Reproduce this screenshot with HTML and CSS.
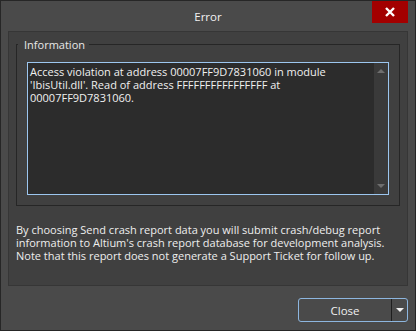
FILE: index.html
```html
<!DOCTYPE html>
<html lang="en">
  <head>
    <meta charset="UTF-8" />
    <title>Error</title>
    <link rel="stylesheet" href="styles.css">
  </head>
  <body>
    <div class="window">
      <div class="titlebar">
        <span class="title">Error</span>
        <button class="close-x" title="Close">
          <svg width="10" height="10" viewBox="0 0 10 10">
            <path d="M1 1 L9 9 M9 1 L1 9" stroke="#fff" stroke-width="2.4" />
          </svg>
        </button>
      </div>

      <div class="panel">
        <fieldset class="group">
          <legend>Information</legend>
          <div class="memo">
            <div class="memo-text">
              Access violation at address 00007FF9D7831060 in module
              'IbisUtil.dll'. Read of address FFFFFFFFFFFFFFFF at
              00007FF9D7831060.
            </div>
            <div class="scrollbar">
              <span class="arrow up"></span>
              <span class="arrow down"></span>
            </div>
          </div>
        </fieldset>

        <p class="note">
          By choosing Send crash report data you will submit crash/debug report
          information to Altium's crash report database for development analysis.
          Note that this report does not generate a Support Ticket for follow up.
        </p>
      </div>

      <div class="footer">
        <div class="split-button">
          <button class="main">Close</button>
          <button class="drop"><span class="caret"></span></button>
        </div>
      </div>
    </div>
  </body>
</html>
```

FILE: styles.css
```css
body {
  margin: 0;
  background: #1e1e1e;
  font-family: "Open Sans", "Noto Sans", sans-serif;
  font-size: 11px;
  color: #f0f0f0;
}
.window {
  box-sizing: border-box;
  width: 416px;
  height: 331px;
  border: 1px solid #262626;
  background: #4a4a4a;
  display: flex;
  flex-direction: column;
}
.titlebar {
  display: flex;
  align-items: flex-start;
  height: 30px;
}
.title {
  flex: 1;
  text-align: center;
  padding-left: 43px;
  line-height: 31px;
  font-size: 11.5px;
  color: #f2f2f2;
}
.close-x {
  width: 36px;
  height: 22px;
  margin-right: 7px;
  border: none;
  padding: 0;
  background: #a30000;
  display: flex;
  align-items: center;
  justify-content: center;
}
.panel {
  margin: 0 7px;
  height: 255px;
  box-sizing: border-box;
  border: 1px solid #363636;
  background: #404040;
  padding: 5px 7px 0;
}
.group {
  margin: 0;
  padding: 10px 10px 10px;
  border: 1px solid #262626;
  min-width: 0;
}
.group legend {
  padding: 0 4px 0 6px;
  margin-left: -9px;
  color: #e8e8e8;
}
.memo {
  display: flex;
  height: 133px;
  box-sizing: border-box;
  border: 1px solid #9cc6ef;
  background: #2c2c2c;
}
.memo-text {
  flex: 1;
  padding: 2px 2px;
  line-height: 13px;
}
.scrollbar {
  width: 14px;
  background: #3a3a3a;
  display: flex;
  flex-direction: column;
  justify-content: space-between;
  align-items: center;
  padding: 6px 0;
}
.arrow {
  width: 0;
  height: 0;
  border-left: 4px solid transparent;
  border-right: 4px solid transparent;
}
.arrow.up {
  border-bottom: 4px solid #6e6e6e;
}
.arrow.down {
  border-top: 4px solid #6e6e6e;
}
.note {
  margin: 17px 0 0;
  line-height: 13px;
  color: #eeeeee;
}
.footer {
  display: flex;
  justify-content: flex-end;
  padding: 12px 7px 0;
}
.split-button {
  display: flex;
  width: 110px;
  height: 24px;
  box-sizing: border-box;
  border: 1px solid #8db6df;
  border-radius: 3px;
  background: #4a4a4a;
}
.split-button button {
  border: none;
  background: none;
  padding: 0;
  color: #f0f0f0;
  font: inherit;
  font-size: 11.5px;
}
.split-button .main {
  flex: 1;
  border-right: 1px solid #1e1e1e;
}
.split-button .drop {
  width: 15px;
  display: flex;
  align-items: center;
  justify-content: center;
}
.caret {
  border-left: 4px solid transparent;
  border-right: 4px solid transparent;
  border-top: 4px solid #f0f0f0;
}
```
